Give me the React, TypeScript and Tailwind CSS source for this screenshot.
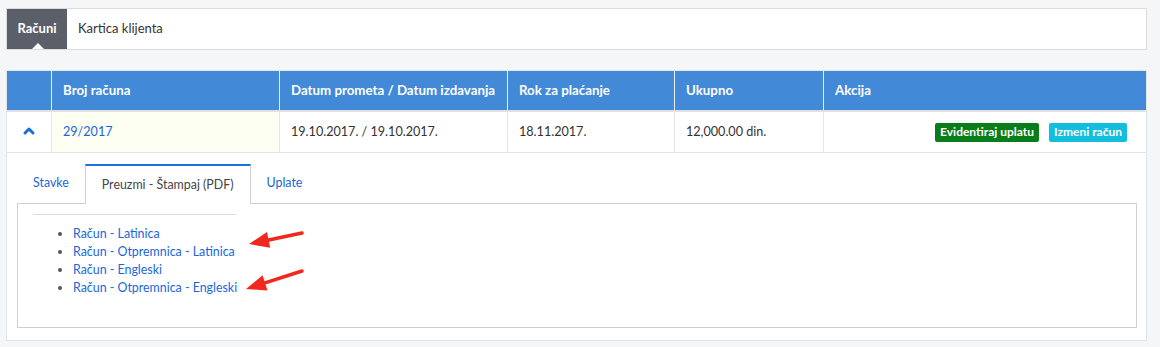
import { ChevronUp } from "lucide-react";

const font = { fontFamily: "Lato, 'Noto Sans', sans-serif" };

function Arrow({ x1, y1, x2, y2 }: { x1: number; y1: number; x2: number; y2: number }) {
  const ang = Math.atan2(y2 - y1, x2 - x1);
  const len = 20;
  const w = 8;
  const bx = x2 - Math.cos(ang) * len;
  const by = y2 - Math.sin(ang) * len;
  const px = -Math.sin(ang) * w;
  const py = Math.cos(ang) * w;
  return (
    <g>
      <line x1={x1} y1={y1} x2={bx} y2={by} stroke="#f0281e" strokeWidth={3.5} strokeLinecap="round" />
      <polygon points={`${x2},${y2} ${bx + px},${by + py} ${bx - px},${by - py}`} fill="#f0281e" />
    </g>
  );
}

export default function App() {
  return (
    <div className="relative w-[1160px] h-[347px] bg-[#f5f6f8] pt-[8px] pl-[6px] text-[13px]" style={font}>
      {/* top tabs */}
      <div className="w-[1141px] h-[42px] bg-white border border-[#dcdcdc] flex items-stretch">
        <div className="relative w-[60px] bg-[#5a5f69] text-white font-bold flex items-center justify-center">
          Računi
          <span className="absolute bottom-0 left-[25px] w-0 h-0 border-l-[6px] border-r-[6px] border-b-[6px] border-l-transparent border-r-transparent border-b-white" />
        </div>
        <div className="flex items-center pl-[11px] text-[#333]">Kartica klijenta</div>
      </div>

      {/* table */}
      <div className="mt-[20px] w-[1141px] bg-white border border-[#e3e4e6]">
        <div className="flex h-[41px] bg-[#4289d8] text-white font-bold text-[13.3px] border-b-2 border-[#dfe1e4]">
          <div className="w-[45px] border-r border-[#e8eef7]" />
          <div className="w-[228px] border-r border-[#e8eef7] flex items-center pl-[11px]">Broj računa</div>
          <div className="w-[228px] border-r border-[#e8eef7] flex items-center pl-[11px]">Datum prometa / Datum izdavanja</div>
          <div className="w-[167px] border-r border-[#e8eef7] flex items-center pl-[11px]">Rok za plaćanje</div>
          <div className="w-[149px] border-r border-[#e8eef7] flex items-center pl-[11px]">Ukupno</div>
          <div className="flex-1 flex items-center pl-[11px]">Akcija</div>
        </div>
        <div className="flex h-[41px] text-[#333] text-[12.6px] border-b border-[#e5e5e5]">
          <div className="w-[45px] border-r border-[#e5e5e5] flex items-center justify-center text-[#1a6fd6]">
            <ChevronUp size={16} strokeWidth={4.5} className="-mt-[2px]" />
          </div>
          <div className="w-[228px] border-r border-[#e5e5e5] bg-[#fefff3] flex items-center pl-[11px] text-[#1a66d9]">29/2017</div>
          <div className="w-[228px] border-r border-[#e5e5e5] flex items-center pl-[11px]">19.10.2017. / 19.10.2017.</div>
          <div className="w-[167px] border-r border-[#e5e5e5] flex items-center pl-[11px]">18.11.2017.</div>
          <div className="w-[149px] border-r border-[#e5e5e5] flex items-center pl-[11px]">12,000.00 din.</div>
          <div className="flex-1 flex items-center justify-end pr-[19px] gap-[10px]">
            <span className="h-[19px] px-[5px] rounded-[2px] bg-[#0a7d1b] text-white font-bold text-[12px] flex items-center">Evidentiraj uplatu</span>
            <span className="h-[19px] px-[5px] rounded-[2px] bg-[#13bedd] text-white font-bold text-[12px] flex items-center">Izmeni račun</span>
          </div>
        </div>

        {/* expanded */}
        <div className="pt-[11px] pb-[12px] pl-[10px] pr-[9px] text-[12.4px]">
          <div className="flex h-[40px] items-stretch">
            <div className="px-[16px] flex items-center text-[#1a66d9] border-b border-[#d0d0d0]">Stavke</div>
            <div className="px-[16px] flex items-center text-[#444] border-t-2 border-t-[#1a73d9] border-x border-x-[#d0d0d0] bg-white">Preuzmi - Štampaj (PDF)</div>
            <div className="px-[16px] flex items-center text-[#1a66d9] border-b border-[#d0d0d0]">Uplate</div>
            <div className="flex-1 border-b border-[#d0d0d0]" />
          </div>
          <div className="h-[124px] border border-t-0 border-[#d0d0d0] pt-[10px] pl-[15px]">
            <div className="w-[203px] border-t border-[#dcdcdc]" />
            <ul className="list-disc pl-[40px] mt-[10px] leading-[18px] text-[#1a66d9] marker:text-[#555]">
              <li>Račun - Latinica</li>
              <li>Račun - Otpremnica - Latinica</li>
              <li>Račun - Engleski</li>
              <li>Račun - Otpremnica - Engleski</li>
            </ul>
          </div>
        </div>
      </div>

      <svg className="absolute left-0 top-0 pointer-events-none" width={1160} height={347}>
        <Arrow x1={302} y1={233} x2={249} y2={244} />
        <Arrow x1={302} y1={271} x2={246} y2={289} />
      </svg>
    </div>
  );
}
